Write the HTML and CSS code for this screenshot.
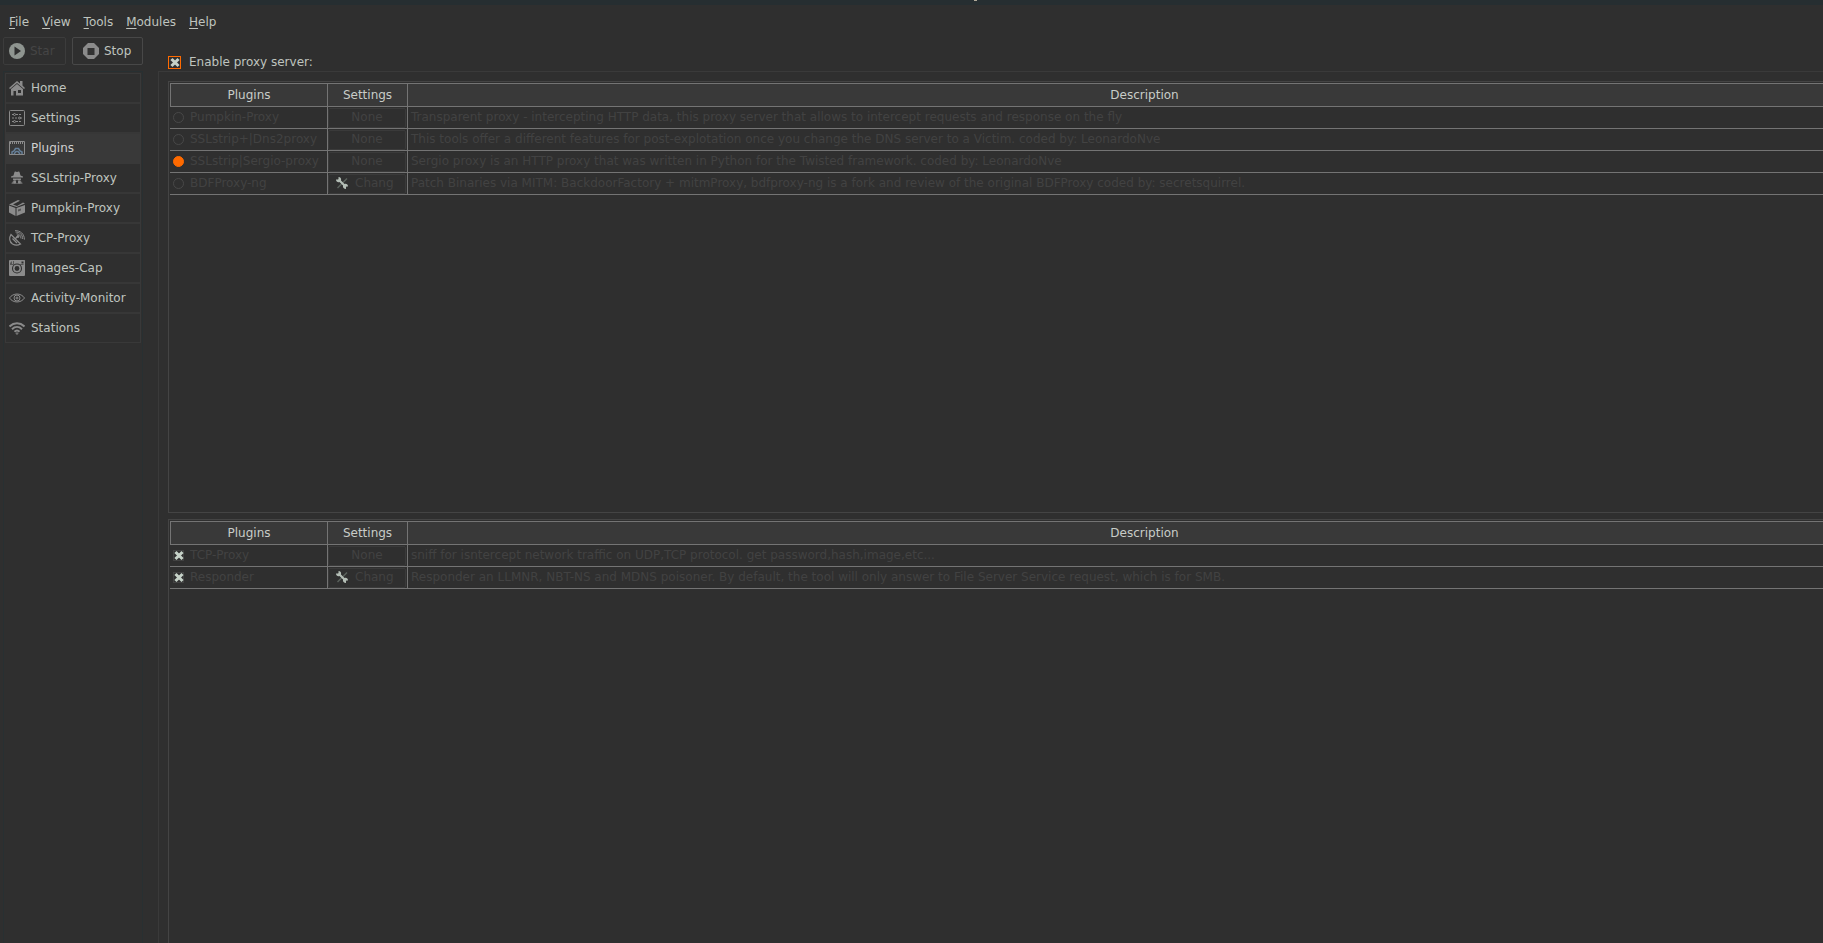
FILE: index.html
```html
<!DOCTYPE html>
<html lang="en">
<head>
  <meta charset="utf-8">
  <title>Plugins</title>
  <link rel="stylesheet" href="styles.css">
</head>
<body>
  <div class="titlebar"><span class="title-mark"></span></div>

  <nav class="menubar">
    <button><u>F</u>ile</button>
    <button><u>V</u>iew</button>
    <button><u>T</u>ools</button>
    <button><u>M</u>odules</button>
    <button><u>H</u>elp</button>
  </nav>

  <div class="main">
    <div class="left">
      <div class="actions">
        <button class="action start" disabled>
          <svg class="icon" viewBox="0 0 16 16"><circle cx="8" cy="8" r="8" fill="#8f9590"/><path d="M5.5 3.5 12 8l-6.500 4.500z" fill="#2f2f2f"/></svg>
          <span>Star</span>
        </button>
        <button class="action stop">
          <svg class="icon" viewBox="0 0 16 16"><path d="M5 0h6l5 5v6l-5 5H5l-5-5V5z" fill="#8b8b8b"/><rect x="4.500" y="5" width="7" height="7" fill="#333"/></svg>
          <span>Stop</span>
        </button>
      </div>

      <div class="sidebar">
        <ul class="tabs">
          <li><a href="#">
            <svg class="icon" viewBox="0 0 16 16"><path d="M0 8 8 1l3 2.500V1h2.500v4.500L16 8l-1 1-7-6-7 6z"/><path d="M2 9l6-5 6 5v6.500H7V11H4.500v4.500H2z"/><path d="M9 10h3v3H9z" fill="#2f2f2f"/></svg>
            Home</a></li>
          <li><a href="#">
            <svg class="icon line" viewBox="0 0 16 16"><rect x=".5" y=".5" width="15" height="15" rx="1"/><path d="M3 4.500h2m2 0h6M3 8h6m2 0h2M3 11.500h2m2 0h6" stroke-dasharray="2 1"/><circle cx="5.500" cy="4.500" r="1"/><circle cx="10.500" cy="8" r="1"/><circle cx="5.500" cy="11.500" r="1"/></svg>
            Settings</a></li>
          <li><a href="#" class="active">
            <svg class="icon line" viewBox="0 0 16 16"><path d="M.5 1.500h15v13H.5z"/><path d="M1 3h14" stroke-dasharray="1 1" stroke-width="2"/><path d="M3 14v-2l2-1 1.500-2.500h3L11 11l2 1v2M5 14l2-2.500h2l2 2.500" stroke="#66809a" stroke-width="1.500"/></svg>
            Plugins</a></li>
          <li><a href="#">
            <svg class="icon" viewBox="0 0 16 16"><path d="M4.500 5.500 5.500 2c1-1 1.500 0 2.500 0s1.500-1 2.500 0l1 3.500L14 6.500v1H2v-1z"/><path d="M4 8.500h8v1l-.5 1H9L8 9.500 7 10.500H4.500L4 9.500z"/><path d="M2.500 14c0-2 1-2.500 2-3l3.500 2.500 3.500-2.500c1 .5 2 1 2 3z" opacity=".6"/><circle cx="5.700" cy="12" r="1.500"/><circle cx="10.300" cy="12" r="1.500"/></svg>
            SSLstrip-Proxy</a></li>
          <li><a href="#">
            <svg class="icon" viewBox="0 0 16 16"><path d="M0 5.500 6.500 8v8L0 12.500z"/><path d="M7.500 8 16 5v7.500L7.500 16z"/><path d="M0 4.500 9 0l2 .7L4 4.500l4 1.500L14 2.500l2 1L7.500 7z"/><path d="M9 9.500l3-1v2l-3 1z" fill="#555"/></svg>
            Pumpkin-Proxy</a></li>
          <li><a href="#">
            <svg class="icon line" viewBox="0 0 16 16"><path d="M2 4.500C0 8 .5 12 3.500 14c2.500 1.500 5.500 1.500 8 0z" stroke-width="1.300"/><path d="M3.500 8.500l4.500 4.500M6 9l3-3" stroke-width="1.300"/><circle cx="9" cy="6.500" r="1" fill="#8b8b8b"/><path d="M7.500 3.800c2.500 0 4.500 1.700 4.500 4.700M6.500 2c4 0 7.200 2.500 7.200 7M6 .6c5.500 0 9.400 3.400 9.400 9"/></svg>
            TCP-Proxy</a></li>
          <li><a href="#">
            <svg class="icon" viewBox="0 0 16 16"><rect width="16" height="16" rx="1"/><path d="M1 5V3l2-2v3h1V1h1v3h7V1.500h2.500V5h-3a5 5 0 0 0-7 0z" fill="#555"/><path d="M5 0h10l1 1v3H5z"/><path d="M12.500 1.500h2v2h-2z" fill="#2f2f2f"/><circle cx="8" cy="8.500" r="5" fill="#2f2f2f"/><circle cx="8" cy="8.500" r="3.200" fill="none" stroke="#8b8b8b" stroke-width="1.500"/></svg>
            Images-Cap</a></li>
          <li><a href="#">
            <svg class="icon line" viewBox="0 0 16 16"><path d="M.5 8C4 2.700 12 2.700 15.500 8 12 13.300 4 13.300.5 8z"/><circle cx="8" cy="8" r="3"/><circle cx="8" cy="8" r="1"/></svg>
            Activity-Monitor</a></li>
          <li><a href="#">
            <svg class="icon line" viewBox="0 0 16 16"><g stroke-width="2"><path d="M.5 6.500c4.500-4.300 10.500-4.300 15 0M3 9.200c3-2.900 7-2.900 10 0M5.500 11.800c1.500-1.500 3.500-1.500 5 0"/></g><circle cx="8" cy="13.500" r=".8"/></svg>
            Stations</a></li>
        </ul>
      </div>
    </div>

    <div class="content">
      <div class="enable">
        <input type="checkbox" id="enable" class="check enable-check" checked>
        <label for="enable">Enable proxy server:</label>
      </div>

      <div class="group">
        <div class="panel">
          <table class="plugins">
            <thead>
              <tr><th class="col-name">Plugins</th><th class="col-settings">Settings</th><th>Description</th></tr>
            </thead>
            <tbody>
              <tr>
                <td><div class="option"><input type="radio" name="proxy" id="pumpkin" disabled><label for="pumpkin">Pumpkin-Proxy</label></div></td>
                <td><button class="cell-btn" disabled>None</button></td>
                <td class="desc">Transparent proxy - intercepting HTTP data, this proxy server that allows to intercept requests and response on the fly</td>
              </tr>
              <tr>
                <td><div class="option"><input type="radio" name="proxy" id="dns2proxy" disabled><label for="dns2proxy">SSLstrip+|Dns2proxy</label></div></td>
                <td><button class="cell-btn" disabled>None</button></td>
                <td class="desc">This tools offer a different features for post-explotation once you change the DNS server to a Victim. coded by: LeonardoNve</td>
              </tr>
              <tr>
                <td><div class="option"><input type="radio" name="proxy" id="sergio" checked disabled><label for="sergio">SSLstrip|Sergio-proxy</label></div></td>
                <td><button class="cell-btn" disabled>None</button></td>
                <td class="desc">Sergio proxy is an HTTP proxy that was written in Python for the Twisted framework. coded by: LeonardoNve</td>
              </tr>
              <tr>
                <td><div class="option"><input type="radio" name="proxy" id="bdfproxy" disabled><label for="bdfproxy">BDFProxy-ng</label></div></td>
                <td><button class="cell-btn change" disabled>
                  <svg class="tool" viewBox="0 0 12 12"><path d="M11 1.500 1.500 11" stroke="#5c635e" stroke-width="1.500"/><path d="M2.500 0v2L2 2.500H0C0 5 2 5.500 3.500 5L7 8.500c-.5 2 1 3.500 3 3.500V10l.500-.5H12c0-2-1.500-3-3.500-2.500L5 3.500C5.500 1.500 4.500 0 2.500 0z" fill="#b4beb6"/></svg>
                  <span>Chang</span></button></td>
                <td class="desc">Patch Binaries via MITM: BackdoorFactory + mitmProxy, bdfproxy-ng is a fork and review of the original BDFProxy coded by: secretsquirrel.</td>
              </tr>
            </tbody>
          </table>
        </div>

        <div class="panel">
          <table class="plugins">
            <thead>
              <tr><th class="col-name">Plugins</th><th class="col-settings">Settings</th><th>Description</th></tr>
            </thead>
            <tbody>
              <tr>
                <td><div class="option"><input type="checkbox" class="check" id="tcp" checked disabled><label for="tcp">TCP-Proxy</label></div></td>
                <td><button class="cell-btn" disabled>None</button></td>
                <td class="desc">sniff for isntercept network traffic on UDP,TCP protocol. get password,hash,image,etc...</td>
              </tr>
              <tr>
                <td><div class="option"><input type="checkbox" class="check" id="responder" checked disabled><label for="responder">Responder</label></div></td>
                <td><button class="cell-btn change" disabled>
                  <svg class="tool" viewBox="0 0 12 12"><path d="M11 1.500 1.500 11" stroke="#5c635e" stroke-width="1.500"/><path d="M2.500 0v2L2 2.500H0C0 5 2 5.500 3.500 5L7 8.500c-.5 2 1 3.500 3 3.500V10l.500-.5H12c0-2-1.500-3-3.500-2.500L5 3.500C5.500 1.500 4.500 0 2.500 0z" fill="#b4beb6"/></svg>
                  <span>Chang</span></button></td>
                <td class="desc">Responder an LLMNR, NBT-NS and MDNS poisoner. By default, the tool will only answer to File Server Service request, which is for SMB.</td>
              </tr>
            </tbody>
          </table>
        </div>
      </div>
    </div>
  </div>
</body>
</html>
```
FILE: styles.css
```css
* {
  box-sizing: border-box;
}
body {
  margin: 0;
  height: 100vh;
  display: flex;
  flex-direction: column;
  overflow: hidden;
  background-color: #2f2f2f;
  color: #bfc4bf;
  font-family: "DejaVu Sans", sans-serif;
  font-size: 12px;
  line-height: 16px;
}
button {
  font: inherit;
  color: inherit;
  background: none;
  border: none;
  padding: 0;
}
.titlebar {
  flex: none;
  height: 5px;
  padding-left: 974px;
  background-color: #262e31;
}
.title-mark {
  display: block;
  width: 3px;
  height: 1px;
  background-color: #b0a898;
}
.menubar {
  display: flex;
  gap: 13px;
  height: 32px;
  flex: none;
  align-items: center;
  padding: 2px 0 0 9px;
}
.menubar u {
  text-underline-offset: 2px;
}
.main {
  display: flex;
  flex: 1;
  min-height: 0;
  gap: 15px;
}
.left {
  width: 143px;
  flex: none;
  display: flex;
  flex-direction: column;
  gap: 6px;
  padding-left: 3px;
}

/* start / stop */
.actions {
  display: flex;
  gap: 6px;
}
.action {
  display: flex;
  align-items: center;
  gap: 5px;
  height: 28px;
  border: 1px solid #3c3c3c;
  border-radius: 2px;
}
.start {
  width: 63px;
  padding-left: 5px;
  color: #454545;
}
.stop {
  width: 71px;
  padding-left: 10px;
  border-color: #484848;
}
.icon {
  width: 16px;
  height: 16px;
  flex: none;
  fill: #8b8b8b;
}
.line {
  fill: none;
  stroke: #8b8b8b;
}

/* sidebar */
.sidebar {
  flex: 1;
  padding: 1px;
  border: 1px solid #283032;
  border-bottom: none;
}
.tabs {
  list-style: none;
  margin: 0;
  padding: 0;
  border: 1px solid #393939;
}
.tabs a {
  display: flex;
  align-items: center;
  gap: 6px;
  height: 30px;
  padding-left: 3px;
  border-bottom: 2px solid #373737;
  color: inherit;
  text-decoration: none;
}
.tabs li:last-child a {
  height: 28px;
  border-bottom: none;
}
.tabs .active {
  background-color: #393939;
  border-color: #393939;
  color: #d0d0d0;
}

/* content */
.content {
  flex: 1;
  min-width: 0;
  display: flex;
  flex-direction: column;
}
.enable {
  display: flex;
  align-items: center;
  gap: 8px;
  height: 34px;
  padding: 16px 0 0 10px;
}
.group {
  flex: 1;
  display: flex;
  flex-direction: column;
  gap: 6px;
  margin-bottom: -8px;
  padding: 9px 0 0 9px;
  border-top: 1px solid #3a3a3a;
  border-left: 1px solid #3a3a3a;
}
.panel {
  flex: 1;
  padding: 1px 0 0 1px;
  overflow: hidden;
  border: 1px solid #444;
  border-right: none;
}

/* the description column runs past the window edge */
.plugins {
  width: calc(100% + 59px);
  table-layout: fixed;
  border-spacing: 0;
}
.plugins th {
  height: 24px;
  padding: 0;
  font-weight: normal;
  color: #c8ccc8;
  background-color: #393939;
  border: 1px solid #747474;
  border-left: none;
}
.plugins th:first-child {
  border-left: 1px solid #747474;
}
.plugins td {
  height: 22px;
  padding: 0;
  color: #424242;
  border-right: 1px solid #747474;
  border-bottom: 1px solid #747474;
}
.col-name {
  width: 158px;
}
.col-settings {
  width: 80px;
}
.plugins .desc {
  padding: 0 0 2px 3px;
  white-space: nowrap;
}
.option {
  display: flex;
  align-items: center;
  gap: 6px;
  padding-left: 3px;
  white-space: nowrap;
}
.option label {
  padding-bottom: 2px;
}
.option input,
.check {
  appearance: none;
  flex: none;
  width: 11px;
  height: 11px;
  margin: 0;
}
.option input[type="radio"] {
  border: 1px solid #484848;
  border-radius: 50%;
}
.option input[type="radio"]:checked {
  background-color: #ff6a00;
  border-color: #ff6a00;
}
.check {
  display: grid;
  place-items: center;
  border: 1px solid #424242;
}
.check::before,
.check::after {
  content: "";
  grid-area: 1 / 1;
  width: 10px;
  height: 3px;
  background-color: #c6d2c8;
  transform: rotate(45deg);
}
.check::after {
  transform: rotate(-45deg);
}
.enable-check {
  width: 13px;
  height: 13px;
  border-color: #ff6a00;
}
.cell-btn {
  display: block;
  width: 78px;
  height: 20px;
  padding-bottom: 2px;
  border: 1px solid #3a3a3a;
  border-radius: 2px;
}
.change {
  display: flex;
  align-items: center;
  gap: 7px;
  padding-left: 7px;
}
.tool {
  width: 12px;
  height: 12px;
  flex: none;
}
```
